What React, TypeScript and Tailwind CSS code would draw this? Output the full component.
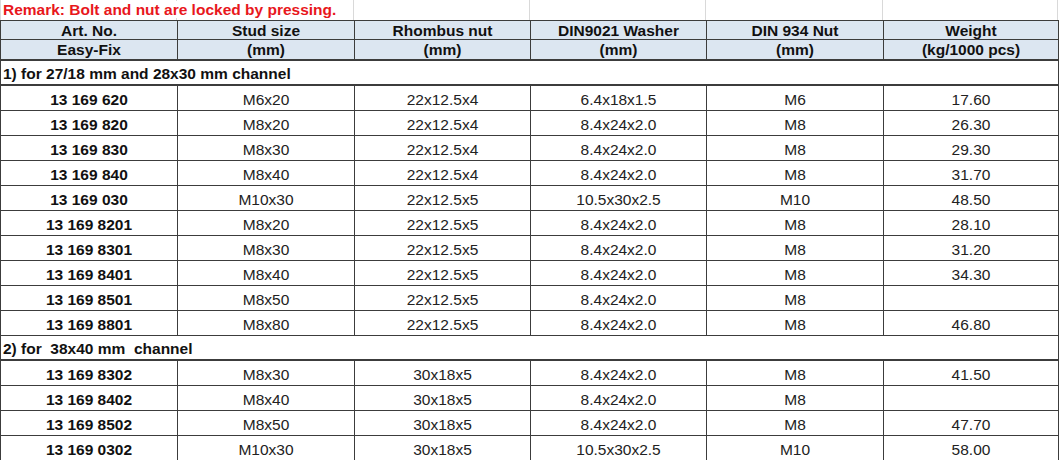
import React from "react";

const widths = ["w-[177px]", "w-[177px]", "w-[176px]", "w-[176px]", "w-[177px]", "w-[175px]"];

type Row = [string, string, string, string, string, string];

const group1: Row[] = [
  ["13 169 620", "M6x20", "22x12.5x4", "6.4x18x1.5", "M6", "17.60"],
  ["13 169 820", "M8x20", "22x12.5x4", "8.4x24x2.0", "M8", "26.30"],
  ["13 169 830", "M8x30", "22x12.5x4", "8.4x24x2.0", "M8", "29.30"],
  ["13 169 840", "M8x40", "22x12.5x4", "8.4x24x2.0", "M8", "31.70"],
  ["13 169 030", "M10x30", "22x12.5x5", "10.5x30x2.5", "M10", "48.50"],
  ["13 169 8201", "M8x20", "22x12.5x5", "8.4x24x2.0", "M8", "28.10"],
  ["13 169 8301", "M8x30", "22x12.5x5", "8.4x24x2.0", "M8", "31.20"],
  ["13 169 8401", "M8x40", "22x12.5x5", "8.4x24x2.0", "M8", "34.30"],
  ["13 169 8501", "M8x50", "22x12.5x5", "8.4x24x2.0", "M8", ""],
  ["13 169 8801", "M8x80", "22x12.5x5", "8.4x24x2.0", "M8", "46.80"],
];

const group2: Row[] = [
  ["13 169 8302", "M8x30", "30x18x5", "8.4x24x2.0", "M8", "41.50"],
  ["13 169 8402", "M8x40", "30x18x5", "8.4x24x2.0", "M8", ""],
  ["13 169 8502", "M8x50", "30x18x5", "8.4x24x2.0", "M8", "47.70"],
  ["13 169 0302", "M10x30", "30x18x5", "10.5x30x2.5", "M10", "58.00"],
];

const header1 = ["Art. No.", "Stud size", "Rhombus nut", "DIN9021 Washer", "DIN 934 Nut", "Weight"];
const header2 = ["Easy-Fix", "(mm)", "(mm)", "(mm)", "(mm)", "(kg/1000 pcs)"];

function DataRow({ row }: { row: Row }) {
  return (
    <div className="flex h-[25px] border-b border-[#3c3c3c]">
      {row.map((v, i) => (
        <div
          key={i}
          className={`${widths[i]} shrink-0 border-r border-[#3c3c3c] flex items-end justify-center pb-[1px] leading-[18px] ${
            i === 0 ? "font-bold text-[#111]" : "text-[#222]"
          }`}
        >
          {v}
        </div>
      ))}
    </div>
  );
}

function Section({ label }: { label: string }) {
  return (
    <div className="flex h-[25px] w-[1058px] items-end whitespace-pre border-b-2 border-r border-[#3c3c3c] pb-[1px] pl-[2px] font-bold leading-[18px] text-[#111]">
      {label}
    </div>
  );
}

export default function App() {
  return (
    <div className="h-[460px] w-[1060px] overflow-hidden bg-white font-['Liberation_Sans',Arial,sans-serif] text-[15.5px]">
      <div className="relative h-[20px]">
        <div className="flex h-[20px]">
          {widths.map((w, i) => (
            <div key={i} className={`${w} shrink-0 border-r border-[#d9d9d9] ${i === 0 ? "border-l" : ""}`} />
          ))}
        </div>
        <div className="absolute inset-0 pl-[3px] font-bold leading-[19px] text-[#e8171c]">
          <span className="bg-white pr-[1px]">Remark: Bolt and nut are locked by pressing.</span>
        </div>
      </div>
      <div className="w-[1059px] border-l border-[#3c3c3c]">
        <div className="flex h-[20px] border-y border-[#3c3c3c] bg-[#dce6f1]">
          {header1.map((h, i) => (
            <div
              key={i}
              className={`${widths[i]} shrink-0 border-r border-[#3c3c3c] text-center font-bold leading-[19px] text-[#111]`}
            >
              {h}
            </div>
          ))}
        </div>
        <div className="flex h-[21px] border-b-2 border-[#3c3c3c] bg-[#dce6f1]">
          {header2.map((h, i) => (
            <div
              key={i}
              className={`${widths[i]} shrink-0 border-r border-[#3c3c3c] text-center font-bold leading-[19px] text-[#111]`}
            >
              {h}
            </div>
          ))}
        </div>
        <Section label="1) for 27/18 mm and 28x30 mm channel" />
        {group1.map((r) => (
          <DataRow key={r[0]} row={r} />
        ))}
        <Section label="2) for  38x40 mm  channel" />
        {group2.map((r) => (
          <DataRow key={r[0]} row={r} />
        ))}
      </div>
    </div>
  );
}
